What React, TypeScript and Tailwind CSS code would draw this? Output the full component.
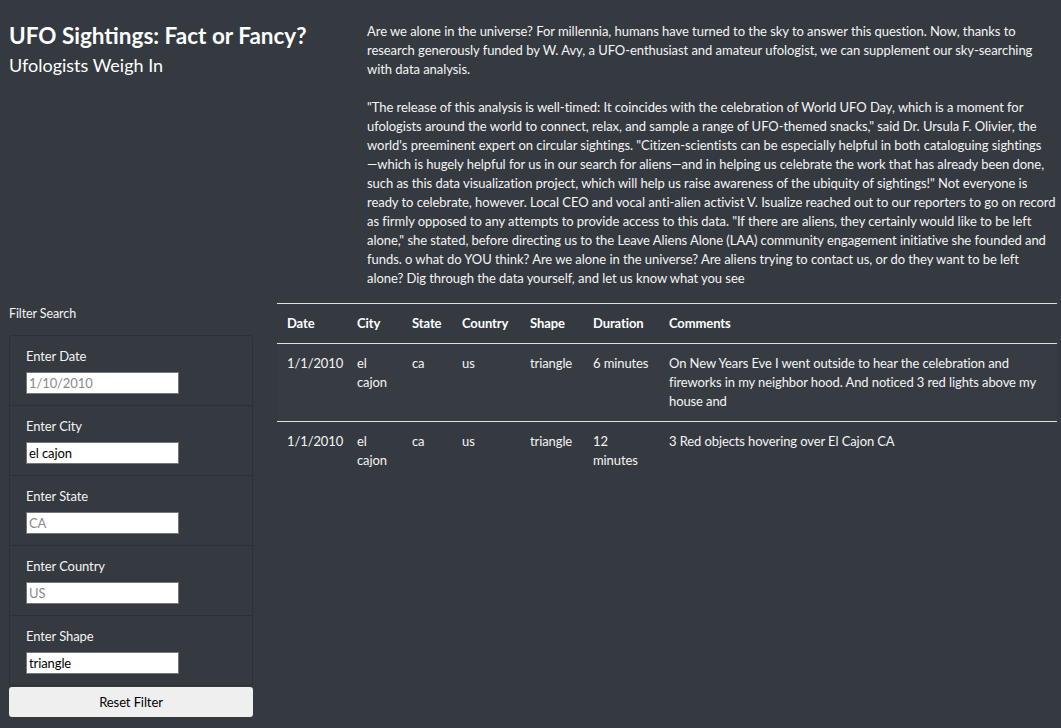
const sightings = [
  {
    datetime: "1/1/2010",
    city: "el cajon",
    state: "ca",
    country: "us",
    shape: "triangle",
    duration: "6 minutes",
    comments:
      "On New Years Eve I went outside to hear the celebration and fireworks in my neighbor hood. And noticed 3 red lights above my house and",
  },
  {
    datetime: "1/1/2010",
    city: "el cajon",
    state: "ca",
    country: "us",
    shape: "triangle",
    duration: "12 minutes",
    comments: "3 Red objects hovering over El Cajon CA",
  },
];

const filters = [
  { label: "Enter Date", value: "", placeholder: "1/10/2010" },
  { label: "Enter City", value: "el cajon", placeholder: "" },
  { label: "Enter State", value: "", placeholder: "CA" },
  { label: "Enter Country", value: "", placeholder: "US" },
  { label: "Enter Shape", value: "triangle", placeholder: "" },
];

const headers = [
  { name: "Date", w: "w-[70px]" },
  { name: "City", w: "w-[55px]" },
  { name: "State", w: "w-[50px]" },
  { name: "Country", w: "w-[68px]" },
  { name: "Shape", w: "w-[63px]" },
  { name: "Duration", w: "w-[76px]" },
  { name: "Comments", w: "" },
];

// lines kept as in the original article layout
const intro = [
  "Are we alone in the universe? For millennia, humans have turned to the sky to answer this question. Now, thanks to",
  "research generously funded by W. Avy, a UFO-enthusiast and amateur ufologist, we can supplement our sky-searching",
  "with data analysis.",
];

const article = [
  "\"The release of this analysis is well-timed: It coincides with the celebration of World UFO Day, which is a moment for",
  "ufologists around the world to connect, relax, and sample a range of UFO-themed snacks,\" said Dr. Ursula F. Olivier, the",
  "world's preeminent expert on circular sightings. \"Citizen-scientists can be especially helpful in both cataloguing sightings",
  "—which is hugely helpful for us in our search for aliens—and in helping us celebrate the work that has already been done,",
  "such as this data visualization project, which will help us raise awareness of the ubiquity of sightings!\" Not everyone is",
  "ready to celebrate, however. Local CEO and vocal anti-alien activist V. Isualize reached out to our reporters to go on record",
  "as firmly opposed to any attempts to provide access to this data. \"If there are aliens, they certainly would like to be left",
  "alone,\" she stated, before directing us to the Leave Aliens Alone (LAA) community engagement initiative she founded and",
  "funds. o what do YOU think? Are we alone in the universe? Are aliens trying to contact us, or do they want to be left",
  "alone? Dig through the data yourself, and let us know what you see",
];

export default function App() {
  return (
    <div className="min-h-[728px] bg-[#343a40] text-[#f4f4f4] font-['Lato','Liberation_Sans',sans-serif] text-[13px] leading-[19px] tracking-[-0.1px]">
      <div className="flex">
        <div className="w-[354px] shrink-0 pl-[9px] pt-[21px] tracking-normal">
          <h1 className="text-[22.5px] leading-[30px] font-bold text-white">UFO Sightings: Fact or Fancy?</h1>
          <h2 className="text-[18px] leading-[24px] mt-[2px] text-white">Ufologists Weigh In</h2>
        </div>
        <div className="flex-1 min-w-0 pl-[13px] pt-[22px] tracking-[-0.05px]">
          <p>
            {intro.map((l) => (
              <span key={l} className="block whitespace-nowrap">
                {l}
              </span>
            ))}
          </p>
          <p className="mt-[19px]">
            {article.map((l) => (
              <span key={l} className="block whitespace-nowrap">
                {l}
              </span>
            ))}
          </p>
        </div>
      </div>

      <div className="flex mt-[15px]">
        <div className="w-[265px] shrink-0 pl-[9px] pr-[12px]">
          <div className="pt-px pb-[12px] text-[12.5px]">Filter Search</div>
          <ul className="border border-[#2c3137] rounded-[3px]">
            {filters.map((f, i) => (
              <li
                key={f.label}
                className={`px-[16px] pt-[11px] pb-[11px] ${i > 0 ? "border-t border-[#2c3137]" : ""}`}
              >
                <label className="block leading-[19px] mb-[6px]">{f.label}</label>
                <input
                  type="text"
                  defaultValue={f.value}
                  placeholder={f.placeholder}
                  className="block w-[153px] h-[22px] bg-white border-[1.5px] border-[#767676] px-[2px] text-[13px] text-black placeholder:text-[#8a8a8a] outline-none"
                />
              </li>
            ))}
          </ul>
          <button className="block w-full h-[30px] mt-px bg-[#efefef] text-black rounded-[3px] text-[13px]">
            Reset Filter
          </button>
        </div>

        <div className="flex-1 pl-[12px] pr-[4px]">
          <table className="w-full table-fixed border-collapse text-left">
            <thead>
              <tr className="border-t border-b border-[#dee2e6]">
                {headers.map((h) => (
                  <th key={h.name} className={`${h.w} px-[10px] py-[10px] font-bold text-white`}>
                    {h.name}
                  </th>
                ))}
              </tr>
            </thead>
            <tbody>
              {sightings.map((s, i) => (
                <tr key={i} className={i === 0 ? "bg-[#373c43] border-b border-[#dee2e6]" : ""}>
                  {[s.datetime, s.city, s.state, s.country, s.shape, s.duration, s.comments].map((c, j) => (
                    <td key={j} className="px-[10px] pt-[10px] pb-[10px] align-top">
                      {c}
                    </td>
                  ))}
                </tr>
              ))}
            </tbody>
          </table>
        </div>
      </div>
    </div>
  );
}
